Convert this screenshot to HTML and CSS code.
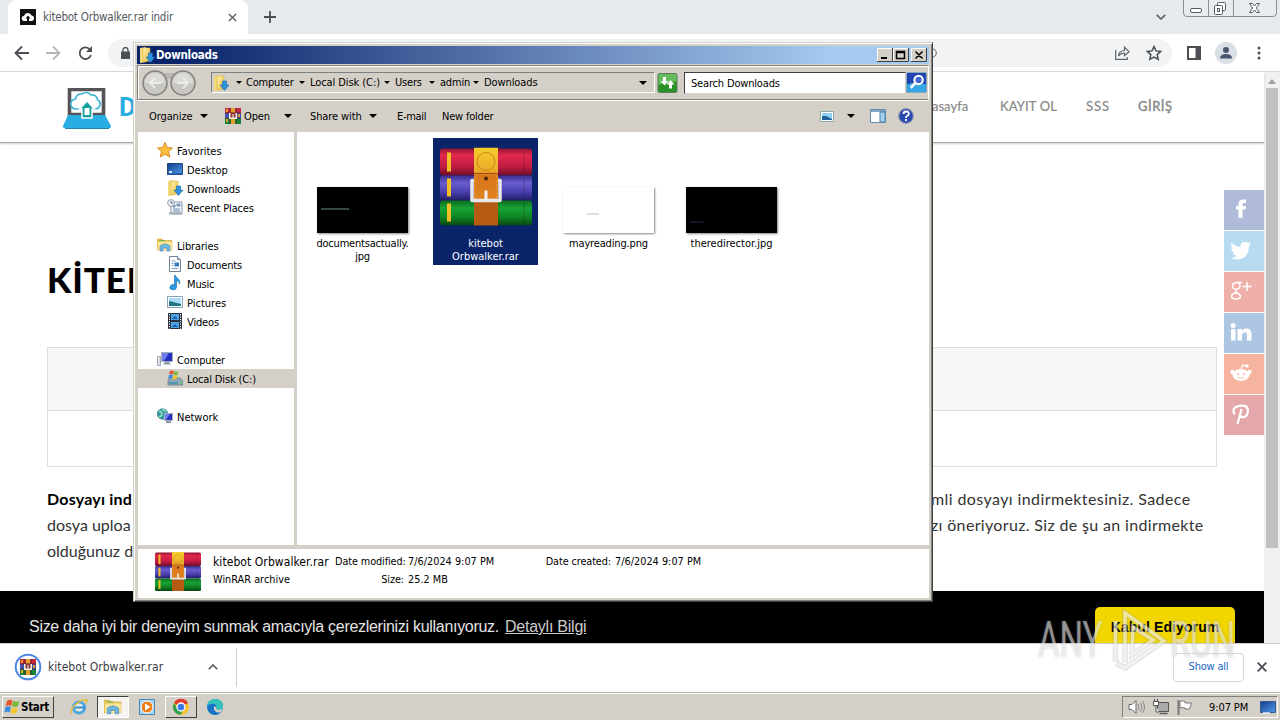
FILE: index.html
```
<!DOCTYPE html>
<html lang="tr">
<head>
<meta charset="utf-8">
<title>Desktop</title>
<link rel="stylesheet" href="styles.css">
</head>
<body>
<svg class="defs" aria-hidden="true">
<defs>
<linearGradient id="gr" x2="0" y2="1"><stop offset="0" stop-color="#8e1730"/><stop offset=".25" stop-color="#e2284c"/><stop offset=".65" stop-color="#c41d42"/><stop offset="1" stop-color="#6f0d28"/></linearGradient>
<linearGradient id="gb" x2="0" y2="1"><stop offset="0" stop-color="#36308c"/><stop offset=".3" stop-color="#6a5ccf"/><stop offset=".65" stop-color="#4a41ae"/><stop offset="1" stop-color="#211c66"/></linearGradient>
<linearGradient id="gg" x2="0" y2="1"><stop offset="0" stop-color="#0c6a1e"/><stop offset=".3" stop-color="#17a334"/><stop offset=".65" stop-color="#0f8526"/><stop offset="1" stop-color="#07450f"/></linearGradient>
<linearGradient id="gs" x2="0" y2="1"><stop offset="0" stop-color="#f4cf2c"/><stop offset=".3" stop-color="#eda92a"/><stop offset=".36" stop-color="#d9761b"/><stop offset=".7" stop-color="#e08420"/><stop offset="1" stop-color="#a4500f"/></linearGradient>
<linearGradient id="gf" x2="1" y2="1"><stop offset="0" stop-color="#fff3b0"/><stop offset="1" stop-color="#e8b93c"/></linearGradient>
<linearGradient id="gscr" x2="1" y2="1"><stop offset="0" stop-color="#123c8c"/><stop offset="1" stop-color="#4f9be8"/></linearGradient>
<symbol id="rar" viewBox="0 0 92 78" preserveAspectRatio="none">
<rect x="0" y="1" width="92" height="27" rx="3" fill="url(#gr)"/><rect y="28" x="0" width="92" height="25" rx="3" fill="url(#gb)"/><rect y="53" x="0" width="92" height="25" rx="3" fill="url(#gg)"/>
<path d="M7 5h4v19H7zM7 31h4v18H7zM7 56h4v18H7z" fill="#f2bf27"/>
<path d="M84 4v21M84 30v20M84 55v20" stroke="#000" stroke-opacity=".2"/>
<path d="M34 0h24v78H34z" fill="url(#gs)"/><path d="M35 1v76M57 1v76" stroke="#f7c052" stroke-dasharray="2 2" stroke-opacity=".7"/>
<path d="M34 54h24v24H34z" fill="#b65b14"/><circle cx="46" cy="14" r="9" fill="none" stroke="#c98916"/><path d="M34 26h24" stroke="#9a5210"/><circle cx="46" cy="31" r="2" fill="#4b2608"/>
<path d="M34 33h-2v20h28V33h-2" fill="none" stroke="#e8e8ec" stroke-width="3.500" stroke-linejoin="round"/><path d="M46 43v9" stroke="#f3f3f3" stroke-width="3"/>
</symbol>
<symbol id="rar16" viewBox="0 0 16 16"><path fill="#c8283e" d="M0 0h16v5H0z"/><path fill="#3d55b8" d="M0 5h16v5H0z"/><path fill="#17823a" d="M0 10h16v6H0z"/><path fill="#e3a02a" d="M1 1h2v3H1zM6 0h4v5H6zM1 11h2v3H1zM6 11h4v5H6zM13 6h2v3h-2z"/><path fill="#5c2233" d="M0 4.600h16v.8H0zM0 9.800h16v.8H0zM4.500 0h.8v16h-.8zM10.800 0h.8v16h-.8z"/><path fill="#f4f0e8" d="M4 5h8v6H4z"/><path fill="#8a3330" d="M5.500 5h5v4.500h-5z"/><path fill="#fff" d="M7.500 6h1v4h-1z"/></symbol>
<symbol id="dl" viewBox="0 0 16 16"><path d="M1 1l6-1v15l-6 1z" fill="#f4d978"/><path d="M4 1h7v13l-7 1z" fill="url(#gf)" stroke="#d2a83b" stroke-width=".5"/><path d="M9.500 6h4v4H16l-4.500 5.500L7 10h2.500z" fill="#2e92de" stroke="#1467b0" stroke-width=".6"/></symbol>
<symbol id="star" viewBox="0 0 16 16"><path d="M8 .5l2.200 5 5.300.5-4 3.600 1.300 5.400L8 12.200 3.200 15l1.300-5.400L.5 6l5.300-.5z" fill="#fbbe3c" stroke="#d87f17" stroke-width=".9"/></symbol>
<symbol id="desk" viewBox="0 0 16 16"><path d="M.5 2.500h15v11H.5z" fill="url(#gscr)" stroke="#24447c"/><path d="M1 12h14v1.500H1z" fill="#2a65b5"/><path d="M2 10h3v2H2z" fill="#cfe6ff"/></symbol>
<symbol id="recent" viewBox="0 0 16 16"><path d="M4 3h11v12H4z" fill="#f4f7fa" stroke="#8b9aa8"/><path d="M6 6h2v2H6zM10 5h3v2h-3zM6 10h7M6 12h7" stroke="#6a8cae" fill="#a5bfd8"/><circle cx="4" cy="4" r="3.400" fill="#eef3f7" stroke="#94a3b0"/><path d="M4 2v2h2" fill="none" stroke="#55636f"/><path d="M2 13h12v2.500H2z" fill="#a9b5bf"/></symbol>
<symbol id="lib" viewBox="0 0 16 16"><path d="M0 2h5l1 1.500h9V13H0z" fill="#f0cc59" stroke="#c9a13a" stroke-width=".6"/><path d="M1 5h14v8H1z" fill="#fbe79a"/><path d="M3 9q5-4 10 0v5h-3v-3H6v3H3z" fill="#6fb7e4" stroke="#3c87ba" stroke-width=".6"/><path d="M2 3.500h6" stroke="#6cb35b"/></symbol>
<symbol id="doc" viewBox="0 0 16 16"><path d="M2.500.5h8l3 3v12h-11z" fill="#fff" stroke="#6f8296"/><path d="M10.500.5v3h3" fill="#dbe5ee" stroke="#6f8296"/><path d="M4.500 5h4M4.500 7.500h2M4.500 9.500h2M4.500 12.500h7" stroke="#7d9fc6"/><path d="M7.500 6.500h4.500v4H7.500z" fill="#3b78c0"/></symbol>
<symbol id="music" viewBox="0 0 16 16"><path d="M8 0c1 3 6 4 4.500 9-.3-2-1.500-3-3-3.400V12.500a3.300 2.600 0 1 1-2-2.700V0z" fill="#2d9be2" stroke="#1467ad" stroke-width=".6"/></symbol>
<symbol id="pic" viewBox="0 0 16 16"><path d="M.5 2.500h15v11H.5z" fill="#fff" stroke="#8aa0b4"/><path d="M2 4h12v8H2z" fill="#a6dcf5"/><path d="M2 7l4 1 8 2v2H2z" fill="#1e7583"/></symbol>
<symbol id="video" viewBox="0 0 16 16"><path d="M1 0h14v16H1z" fill="#263240"/><path d="M4 1h8v6H4zM4 9h8v6H4z" fill="#4fa3e0"/><path d="M2.500 1v15M13.500 1v15" stroke="#fff" stroke-dasharray="1.200 1.200"/><path d="M5 6l3-3 3 3zM5 14l3-3 3 3z" fill="#1d5ea8"/></symbol>
<symbol id="pc" viewBox="0 0 16 16"><path d="M4.500 1.500h11v9h-11z" fill="#2430c0" stroke="#a7afbd"/><path d="M5 2h7l-5 8H5z" fill="#6d7df0"/><path d="M8 11h4l2 2.500H6z" fill="#8d97a5"/><path d="M.5 5.500h3v9h-3z" fill="#dbe0e6" stroke="#8f99a5" stroke-width=".8"/></symbol>
<symbol id="disk" viewBox="0 0 16 16"><path d="M1 10l2-2h10l3 3v4H1z" fill="#93a9b8" stroke="#56707f" stroke-width=".7"/><path d="M2 12h9v2H2z" fill="#4b9ab2"/><path d="M13 12h2v1.500h-2z" fill="#52df66"/><path d="M3 1q2-1 4 0L6 4.500q-2-1-4 0z" fill="#e8562d"/><path d="M7.500 1.200q2 1 4 0l-1 3.500q-2 1-4 0z" fill="#79b93b"/><path d="M2 5q2-1 4 0L5 8.500q-2-1-4 0z" fill="#3e8de0"/><path d="M6.500 5.200q2 1 4 0l-1 3.500q-2 1-4 0z" fill="#f6c52c"/></symbol>
<symbol id="net" viewBox="0 0 16 16"><circle cx="5.500" cy="6" r="5.200" fill="#329a9f" stroke="#27737e" stroke-width=".7"/><path d="M2 3q3 1 3 3t-3 3M5 1l4 3" stroke="#9de3c4" fill="none" stroke-width="1.500"/><path d="M7.500 5.500h8v7h-8z" fill="#2430c0" stroke="#aab2be"/><path d="M8 6h5l-4 6H8z" fill="#6d7df0"/><path d="M9 14h5" stroke="#8d97a5" stroke-width="2"/></symbol>
<symbol id="flag" viewBox="0 0 16 16"><path d="M3 2q3-2 5.500-.5L7.300 7Q5 5.500 1.600 7z" fill="#e8562d"/><path d="M9.300 2q3 1.500 6 0L14 7.300q-3 1.500-6 0z" fill="#79b93b"/><path d="M1.400 8q3-1.500 5.600 0l-1.200 5.500q-2.500-1.500-5.500 0z" fill="#3e8de0"/><path d="M7.800 8.500q3 1.500 6 0L12.500 14q-3 1.500-6 0z" fill="#f6c52c"/></symbol>
</defs>
</svg>

<div class="desktop">
<div class="tabstrip">
 <div class="tab"><svg class="fav" viewBox="0 0 16 16"><path fill="#111" d="M0 0h16v16H0z"/><path fill="#fff" d="M4.500 12a2.500 2.500 0 0 1-.5-5 4 4 0 0 1 7.600-.5A2.800 2.800 0 0 1 12 12H9V9.500h1.500L8 6.500 5.500 9.500H7V12z"/></svg>
 <span class="tabtitle">kitebot Orbwalker.rar indir</span>
 <svg class="tabx" viewBox="0 0 10 10"><path d="M1 1l8 8M9 1L1 9" stroke="#5f6368" stroke-width="1.600"/></svg></div>
 <svg class="plus" viewBox="0 0 12 12"><path d="M6 0v12M0 6h12" stroke="#4a4d51" stroke-width="1.800"/></svg>
 <svg class="chev" viewBox="0 0 10 6"><path d="M.8.800L5 5 9.200.8" fill="none" stroke="#5f6368" stroke-width="1.700"/></svg>
 <svg class="winctl" viewBox="0 0 94 17"><path d="M.5 0v13q0 3.500 3.500 3.500h86q3.500 0 3.500-3.500V0M25.500 0v16M50.500 0v16" fill="#e9ecef" stroke="#8a8e94"/><rect x="7.500" y="8.500" width="11" height="4" rx="1.500" fill="#fff" stroke="#555b66"/><rect x="34.500" y="2.500" width="8" height="8" rx="1" fill="#fff" stroke="#555b66"/><rect x="31.500" y="5.500" width="8" height="9" rx="1" fill="#fff" stroke="#555b66"/><rect x="34.500" y="8.500" width="2" height="3" fill="none" stroke="#555b66"/><path d="M66.500 3.500h3l2 2.500 2-2.500h3l-3.200 4.500 3.200 4.500h-3l-2-2.500-2 2.500h-3l3.200-4.500z" fill="#fff" stroke="#555b66"/></svg>
</div>
<div class="toolbar">
 <svg class="navs" viewBox="0 0 82 16" fill="none" stroke-width="1.800"><path d="M15 8H2M8 1.500L1.500 8 8 14.500" stroke="#4c5055"/><path d="M32 8h13M39 1.500L45.500 8 39 14.500" stroke="#b5b8bb"/><path d="M76 4.500A5.800 5.800 0 1 0 77 10" stroke="#4c5055"/><path d="M78 1v6h-6z" fill="#4c5055"/></svg>
 <div class="omni"><svg class="lock" viewBox="0 0 9 12"><path d="M0 4.500h9V12H0z" fill="#4c5055"/><path d="M2 5V3a2.500 2.500 0 0 1 5 0v2" fill="none" stroke="#4c5055" stroke-width="1.300"/></svg>
 <svg class="omniend" viewBox="0 0 8 10"><path d="M0 .7h2a4.300 4.300 0 0 1 0 8.600H0" fill="none" stroke="#666"/></svg>
 <svg class="share" viewBox="0 0 15 14" fill="none" stroke="#5f6368" stroke-width="1.200"><path d="M.7 4v9.300h11.500V11M3.500 10q.5-5.500 6-5.500V1.200L14 5.700l-4.500 4V7Q5.500 7 3.500 10z"/></svg>
 <svg class="bstar" viewBox="0 0 16 16"><path d="M8 1.500l2 4.400 4.700.5-3.500 3.200 1 4.700L8 12l-4.200 2.300 1-4.700L1.300 6.400 6 5.900z" fill="none" stroke="#4c5055" stroke-width="1.500"/></svg></div>
 <svg class="side" viewBox="0 0 14 14"><path d="M1 1h12v12H1z" fill="none" stroke="#4c5055" stroke-width="2"/><path d="M8.500 0H14v14H8.500z" fill="#4c5055"/></svg>
 <svg class="avatar" viewBox="0 0 22 22"><circle cx="11" cy="11" r="11" fill="#dadfe6"/><circle cx="11" cy="8" r="3" fill="#4a5670"/><path d="M5 16.500q0-4.500 6-4.500t6 4.500z" fill="#4a5670"/></svg>
 <svg class="dots" viewBox="0 0 4 14"><g fill="#4c5055"><circle cx="2" cy="2" r="1.500"/><circle cx="2" cy="7" r="1.500"/><circle cx="2" cy="12" r="1.500"/></g></svg>
</div>

<div class="viewport">
 <div class="site">
  <header class="sitehead">
   <svg class="logo" viewBox="0 0 50 42"><path d="M7.500 1.500h34v25h-34z" fill="#fff" stroke="#565457" stroke-width="3.600"/><path d="M6 27h37l6 11q.5 2-2 2H3q-2.500 0-2-2z" fill="#29aee4"/><path d="M3 40.500h44" stroke="#2586aa"/><path d="M18 21h-4a5 5 0 0 1-.5-10q1-5.500 6.500-5 5-3.500 9 1 6-.5 6.500 5 3 1 2.500 5-1 4-5 4h-3" fill="#fff" stroke="#3ab2d4" stroke-width="1.600"/><path d="M25 13l7.500 8H30v9H20v-9h-2.500z" fill="#12a19c" stroke="#fff" stroke-width="1.400"/><path d="M22.500 20h5v7h-5z" fill="#fff"/></svg>
   <span class="brand">D</span>
   <nav class="menu"><span class="m1">Anasayfa</span><span class="m2">KAYIT OL</span><span class="m3">SSS</span><span class="m4">GİRİŞ</span></nav>
  </header>
  <main class="main">
   <h1>KİTEB</h1>
   <div class="panel"><div class="prow head"></div><div class="prow"></div></div>
   <div class="para">
    <span><b>Dosyayı ind</b></span><span class="p1">mli dosyayı indirmektesiniz. Sadece</span>
    <span>dosya uploa</span><span class="p2">zı öneriyoruz. Siz de şu an indirmekte</span>
    <span>olduğunuz d</span><span></span>
   </div>
  </main>
  <div class="cookie"><span class="ctext">Size daha iyi bir deneyim sunmak amacıyla çerezlerinizi kullanıyoruz.</span><a class="clink">Detaylı Bilgi</a><span class="cbtn">Kabul Ediyorum</span></div>
  <aside class="social">
   <div class="fb"><svg viewBox="0 0 22 22"><path d="M8.500 20v-8.500H6V8h2.500V6Q8.500 1.500 13 1.500h3V5h-2q-1.500 0-1.500 1.500V8H16l-.5 3.500h-3V20z"/></svg></div>
   <div class="tw"><svg viewBox="0 0 22 22"><path d="M21 4.500l-2.200.8L20.500 3l-2.600 1a4.500 4.500 0 0 0-7.500 4Q5 7.500 1.800 3.500 0 7.500 3 9.800L1.200 9.300q.3 3.500 3.500 4.500l-1.800.1q1 2.700 4 3Q4.500 19 .5 18.800q3 2 7.500 1.800Q19 19 19 7z"/></svg></div>
   <div class="gp"><svg viewBox="0 0 22 22" fill="none" stroke="#fff" stroke-width="1.500"><path d="M12 2.500H6.500Q2.500 3 2.500 6t3.500 3.200T10 6 6.500 2.500M7 9.500q-3 2-.5 3t4 3.500q0 3-4.500 3t-4.500-2.700Q1.500 13 7.500 12.800M17 2v9M12.500 6.500h9"/></svg></div>
   <div class="li"><svg viewBox="0 0 22 22"><path d="M1 8h4.500v11.500H1zM7.500 8H12v1.800Q13.500 7.500 16 7.600q5.500 0 5.500 5.400v6.500H17V13.500q0-2.300-2-2.300T12 13.500v6H7.500z"/><circle cx="3.200" cy="4.500" r="2.500"/></svg></div>
   <div class="rd"><svg viewBox="0 0 22 22"><ellipse cx="11" cy="13" rx="8.500" ry="6"/><circle cx="2.500" cy="10" r="2.200"/><circle cx="19.500" cy="10" r="2.200"/><path d="M11 8l1.500-5 4 1" fill="none" stroke="#fff" stroke-width="1.300"/><circle cx="17" cy="4" r="1.800"/><g fill="#f5b3a0"><circle cx="8" cy="12" r="1"/><circle cx="14" cy="12" r="1"/></g><path d="M7.500 15.500q3.500 1.500 7 0" fill="none" stroke="#f5b3a0" stroke-width=".8"/></svg></div>
   <div class="pt"><svg viewBox="0 0 22 22" fill="none" stroke="#fff" stroke-width="2.200"><path d="M4.500 11.500Q1.500 5.500 7 3.500 17 .5 18 7q0 6.500-4.500 7.200Q10 14.500 9.500 11.500M11.500 6L7.500 21"/></svg></div>
  </aside>
 </div>
 <div class="scroll"><svg viewBox="0 0 8 5"><path d="M4 0l4 5H0z" fill="#a0a0a0"/></svg><div class="thumb"></div></div>
</div>

<div class="dlbar">
 <svg class="dlicon" viewBox="0 0 28 28"><circle cx="14" cy="14" r="12.300" fill="#fff" stroke="#4f86e0" stroke-width="2"/><use href="#rar16" x="6" y="6" width="16" height="16"/></svg>
 <span class="dlname">kitebot Orbwalker.rar</span>
 <svg class="caret" viewBox="0 0 10 6"><path d="M.8 5.200L5 1l4.200 4.200" fill="none" stroke="#5f6368" stroke-width="1.700"/></svg>
 <span class="dlsep"></span><span class="showall">Show all</span>
 <svg class="dlx" viewBox="0 0 10 10"><path d="M.7.700l8.600 8.600M9.300.7L.7 9.300" stroke="#4c5055" stroke-width="1.900"/></svg>
</div>

<div class="taskbar">
 <div class="start"><svg viewBox="0 0 16 16"><use href="#flag"/></svg><span>Start</span></div>
 <div class="q"><svg viewBox="0 0 18 18"><circle cx="9" cy="9.500" r="5.600" fill="#fff" fill-opacity=".5" stroke="#4aa5e0" stroke-width="3"/><path d="M5 9.500h10" stroke="#3a92d2" stroke-width="2"/><path d="M1.500 15.500Q0 11 6 6T17 2q0 2-2 4" fill="none" stroke="#e8bd3c" stroke-width="1.500"/></svg></div>
 <div class="q pressed"><svg viewBox="0 0 16 16"><use href="#lib"/></svg></div>
 <div class="q"><svg class="wmp" viewBox="0 0 16 16"><path d="M.5.500h15v15H.5z" fill="#a9d4f1" stroke="#4588b9"/><circle cx="8" cy="8" r="6" fill="#f07e14" stroke="#fff"/><path d="M6 4.500L11.500 8 6 11.500z" fill="#fff"/></svg></div>
 <div class="q raised"><svg viewBox="0 0 18 18"><circle cx="9" cy="9" r="8" fill="#f4c22b"/><path d="M9 9L2 5A8 8 0 0 1 16 5z" fill="#de3c2f"/><path d="M2 5A8 8 0 0 0 8.500 17L12 10.500 6 11z" fill="#35a04c"/><circle cx="9" cy="9" r="4" fill="#3a78e7" stroke="#fff" stroke-width="1.300"/></svg></div>
 <div class="q"><svg viewBox="0 0 18 18"><circle cx="9" cy="9" r="8" fill="#1673c5"/><path d="M1 8Q2 1 9.500 1 17 1.500 17 8q0 4-4.500 4-2.500 0-2-2Q10.500 5 5 6 2 6.500 1 8z" fill="#35c2b8"/><path d="M10.500 10q-.5 2 2 2 3 0 4.300-2-.5 3-3.300 4.700Q7 14.500 8 8.500q2.500-.5 2.500 1.500z" fill="#d4d0c8"/></svg></div>
 <div class="tray">
  <svg class="t1" viewBox="0 0 18 16"><path d="M1 5.500h3l4-4v13l-4-4H1z" fill="#fff" stroke="#666"/><path d="M10 5q2 3 0 6M12.500 3.500q3 4.500 0 9M14.500 2q4 6 0 12" fill="none" stroke="#888"/></svg>
  <svg class="t2" viewBox="0 0 16 16"><path d="M4.500 3.500h11v9h-11z" fill="#aaa" stroke="#555"/><path d="M6.500 14.500h8" stroke="#555" stroke-width="1.500"/><path d="M.5 2.500h5v4h-5zM1.500 0v2M4.500 0v2M3 7v6h3" fill="#fff" stroke="#555"/></svg>
  <svg class="t3" viewBox="0 0 16 16"><path d="M1.500 1v15" stroke="#777" stroke-width="2"/><path d="M3 2.500q3-1.500 5 0v1.500h6.500l-2 6H8V9q-2-1-5 0z" fill="#fff" stroke="#777"/></svg>
  <span class="clock">9:07 PM</span>
  <svg class="t4" viewBox="0 0 16 13"><path d="M.5.500h15v11H.5z" fill="url(#gscr)" stroke="#35598f"/><path d="M3 12h7" stroke="#e5eef8" stroke-width="1.500"/></svg>
 </div>
</div>

<section class="explorer">
 <div class="title"><svg viewBox="0 0 16 16"><use href="#dl"/></svg><b>Downloads</b>
  <svg class="tbtns" viewBox="0 0 50 14"><g fill="#d4d0c8"><path d="M0 0h16v14H0zM16 0h16v14H16zM34 0h16v14H34z"/></g><path d="M.5 13V.5H15M16.500 13V.5H31M34.500 13V.5H49" fill="none" stroke="#fff"/><path d="M0 13.500h15.500V0M16 13.500h15.500V0M34 13.500h15.500V0" fill="none" stroke="#404040"/><path d="M4 10h6" stroke="#000" stroke-width="2"/><path d="M19.500 3.500h8v7h-8zM19.500 4.500h8M38.500 3.500l7 7M45.500 3.500l-7 7" fill="none" stroke="#000" stroke-width="1.500"/></svg></div>
 <div class="addr">
  <svg class="bf" viewBox="0 0 54 26"><path d="M13 3h28v6H13z" fill="#bbb8b2"/><circle cx="13" cy="13" r="12" fill="#c9c7c3" stroke="#83817d" stroke-width="1.500"/><circle cx="41" cy="13" r="12" fill="#c9c7c3" stroke="#83817d" stroke-width="1.500"/><path d="M3 13a10 10 0 0 1 20 0zM31 13a10 10 0 0 1 20 0z" fill="#dddbd7"/><path d="M19 13H8M13 8l-5 5 5 5M35 13h11M41 8l5 5-5 5" fill="none" stroke="#ecebe8" stroke-width="2"/></svg>
  <div class="crumbs"><svg class="cic" viewBox="0 0 16 16"><use href="#dl"/></svg><i class="tri s"></i><span class="c1">Computer</span><i class="tri s"></i><span class="c2">Local Disk (C:)</span><i class="tri s"></i><span class="c3">Users</span><i class="tri s"></i><span class="c4">admin</span><i class="tri s"></i><span class="c5">Downloads</span><i class="tri end"></i></div>
  <svg class="refresh" viewBox="0 0 20 20"><rect x=".5" y=".5" width="19" height="19" rx="1.500" fill="#299329" stroke="#5c7a5c"/><path d="M1 1h18v8Q10 8 1 12z" fill="#64bc5e"/><path d="M5.500 4h3v4H11l-4 4.500L3 8h2.500zM11.500 15.500v-4H9L13 7l4 4.500h-2.500v4z" fill="#fff"/></svg>
  <div class="search">Search Downloads</div>
  <svg class="sbtn" viewBox="0 0 20 20"><rect x=".5" y=".5" width="19" height="19" rx="1.500" fill="#2144b0" stroke="#8ab"/><path d="M1 12q9-4 18 0v7H1z" fill="#35a6e6"/><circle cx="12" cy="7.500" r="4" fill="#3f67cf" stroke="#fff" stroke-width="2"/><path d="M9 10.500L4.500 15" stroke="#fff" stroke-width="2.500"/></svg>
 </div>
 <div class="cmd"><span>Organize</span><i class="tri"></i><svg viewBox="0 0 16 16"><use href="#rar16"/></svg><span>Open</span><i class="tri"></i><span>Share with</span><i class="tri"></i><span class="em">E-mail</span><span class="nf">New folder</span>
  <svg class="v1" viewBox="0 0 14 11"><path d="M.5.500h13v10H.5z" fill="#fff" stroke="#8aa"/><path d="M2 2h10v7H2z" fill="#8fd0f0"/><path d="M2 5l4 0 6 3v1H2z" fill="#20609c"/></svg><i class="tri"></i>
  <svg viewBox="0 0 16 14"><path d="M.5.500h15v13H.5z" fill="#fff" stroke="#688aab"/><path d="M1 1h14v2H1z" fill="#7fa5c8"/><path d="M10 3h5v10h-5z" fill="#a5d3ef" stroke="#4d82ac"/></svg>
  <svg viewBox="0 0 16 16"><circle cx="8" cy="8" r="7.300" fill="#2c49ad" stroke="#8893b0" stroke-width="1.200"/><path d="M5.500 6q0-2.500 2.700-2.500T10.800 6Q10.800 7 9 8 8 8.500 8 10M8 11v2" fill="none" stroke="#fff" stroke-width="1.800"/></svg></div>
 <div class="body">
  <div class="tree">
   <div class="r"><svg><use href="#star"/></svg><span>Favorites</span></div>
   <div class="r k"><svg><use href="#desk"/></svg><span>Desktop</span></div>
   <div class="r k"><svg><use href="#dl"/></svg><span class="t">Downloads</span></div>
   <div class="r k"><svg><use href="#recent"/></svg><span class="t">Recent Places</span></div>
   <div class="r gap"><svg><use href="#lib"/></svg><span class="t">Libraries</span></div>
   <div class="r k"><svg><use href="#doc"/></svg><span class="t">Documents</span></div>
   <div class="r k"><svg><use href="#music"/></svg><span class="t">Music</span></div>
   <div class="r k"><svg><use href="#pic"/></svg><span>Pictures</span></div>
   <div class="r k"><svg><use href="#video"/></svg><span class="t">Videos</span></div>
   <div class="r gap"><svg><use href="#pc"/></svg><span class="t">Computer</span></div>
   <div class="r k sel"><svg><use href="#disk"/></svg><span class="t">Local Disk (C:)</span></div>
   <div class="r gap"><svg><use href="#net"/></svg><span>Network</span></div>
  </div>
  <div class="files">
   <div class="file"><div class="pic"><div class="th black"><em class="g"></em></div></div><span class="long">documentsactually.<br>jpg</span></div>
   <div class="file on"><div class="pic rarpic"><svg viewBox="0 0 92 78"><use href="#rar"/></svg></div><span>kitebot<br>Orbwalker.rar</span></div>
   <div class="file"><div class="pic"><div class="th white"><em class="w"></em></div></div><span class="mid">mayreading.png</span></div>
   <div class="file"><div class="pic"><div class="th black"><em class="b"></em></div></div><span>theredirector.jpg</span></div>
  </div>
 </div>
 <div class="details">
  <svg class="dr" viewBox="0 0 46 39" preserveAspectRatio="none"><use href="#rar" width="46" height="39"/></svg>
  <div class="dgrid"><span class="n">kitebot Orbwalker.rar</span><span class="l">Date modified:</span><span class="d">7/6/2024 9:07 PM</span><span class="l">Date created:</span><span class="d">7/6/2024 9:07 PM</span>
  <span class="d">WinRAR archive</span><span class="l">Size:</span><span class="d">25.2 MB</span></div>
 </div>
</section>

<div class="mark"><span>ANY</span><svg viewBox="0 0 58 64" fill="none"><g stroke="#999" stroke-opacity=".3" stroke-width="5.500"><path d="M4.500 14v41"/><path d="M14 56V6l39 28-39 27-9-5M22 20l20 13-21 15z"/></g><g stroke="#fff" stroke-opacity=".55" stroke-width="3.500"><path d="M4.500 14v41"/><path d="M14 56V6l39 28-39 27-9-5M22 20l20 13-21 15z"/></g></svg><span>RUN</span></div>
</div>
</body>
</html>
```
FILE: styles.css
```
* { box-sizing: border-box; }
body { margin: 0; font-family: "DejaVu Sans Condensed", "DejaVu Sans", sans-serif; font-stretch: condensed; font-size: 11px; color: #000; }
.defs { position: absolute; width: 0; height: 0; }
svg { display: block; flex: none; }
.desktop { position: relative; width: 1280px; height: 720px; overflow: hidden; display: flex; flex-direction: column; }

/* browser frame */
.tabstrip { height: 34px; background: #e7eaed; display: flex; align-items: center; padding-left: 8px; flex: none; }
.tab { width: 240px; height: 34px; background: #fff; border-radius: 8px 8px 0 0; display: flex; align-items: center; padding-left: 12px; }
.fav { width: 16px; height: 16px; }
.tabtitle { margin-left: 7px; width: 185px; font-size: 11.5px; letter-spacing: -.22px; color: #55595d; white-space: nowrap; }
.tabx { width: 9px; height: 9px; }
.plus { width: 12px; height: 12px; margin-left: 16px; }
.chev { width: 10px; height: 6px; margin-left: 880px; }
.winctl { width: 94px; height: 17px; margin-left: 17px; align-self: flex-start; }
.toolbar { height: 38px; background: #fff; border-bottom: 1px solid #d5d7d9; display: flex; align-items: center; flex: none; padding-left: 14px; }
.navs { width: 82px; height: 16px; }
.omni { margin-left: 12px; width: 1064px; height: 28px; border-radius: 14px; background: #f1f3f4; display: flex; align-items: center; padding-left: 13px; }
.lock { width: 9px; height: 12px; }
.omniend { width: 8px; height: 10px; margin-left: 800px; }
.share { width: 15px; height: 14px; margin-left: 177px; }
.bstar { width: 16px; height: 16px; margin-left: 16px; }
.side { width: 14px; height: 14px; margin-left: 15px; }
.avatar { width: 22px; height: 22px; margin-left: 14px; }
.dots { width: 4px; height: 14px; margin-left: 20px; }

/* web page */
.viewport { height: 571px; display: flex; flex: none; }
.site { position: relative; width: 1264px; background: #fff; display: flex; flex-direction: column; }
.sitehead { height: 71px; display: flex; align-items: center; padding-left: 62px; border-bottom: 1px solid #aaa; box-shadow: 0 1px 2px #ccc; flex: none; }
.logo { width: 50px; height: 42px; margin-top: 4px; }
.brand { margin-left: 7px; width: 20px; font: bold 26px "Roboto", sans-serif; color: #29aee4; }
.menu { margin-left: 777px; margin-top: -2px; display: grid; grid-template-columns: 84px 86px 52px 60px; font: 13px "Lato", sans-serif; color: #888; -webkit-text-stroke: .2px #888; }
.menu .m2 { letter-spacing: .15px; } .menu .m3 { letter-spacing: 1px; } .menu .m4 { letter-spacing: .5px; -webkit-text-stroke-width: .4px; }
.main { padding: 115px 47px 0; height: 448px; flex: none; }
h1 { margin: 0; font: 900 35px/42px "Lato", sans-serif; letter-spacing: .9px; }
.panel { margin-top: 47px; border: 1px solid #ddd; height: 120px; }
.prow { height: 55px; }
.prow.head { height: 63px; background: #f7f7f7; border-bottom: 1px solid #ddd; }
.para { margin-top: 19px; display: grid; grid-template-columns: 86px 300px; column-gap: 798px; grid-auto-rows: 26px; line-height: 26px; font-family: "Lato", sans-serif; font-size: 16px; color: #333; white-space: nowrap; }
.para b { color: #000; letter-spacing: .2px; }
.p1 { letter-spacing: .4px; } .p2 { letter-spacing: .34px; }
.cookie { height: 52px; background: #000; display: flex; align-items: flex-start; padding: 16px 29px 0; font: 16px "Liberation Sans", Arial, sans-serif; overflow: hidden; }
.ctext, .clink { line-height: 40px; color: #e4e4e4; white-space: nowrap; }
.ctext { width: 476px; letter-spacing: -.29px; }
.clink { width: 82px; text-decoration: underline; color: #ccc; letter-spacing: -.24px; }
.cbtn { margin-left: 508px; width: 140px; height: 50px; flex: none; background: #f1d600; border-radius: 5px 5px 0 0; text-align: center; font: bold 14px/40px "Liberation Sans", sans-serif; color: #000; letter-spacing: .1px; }
.social { position: absolute; right: 0; top: 118px; display: grid; gap: 1px; }
.social div { width: 40px; height: 40px; padding: 8px 0 0 6px; }
.social svg { width: 22px; height: 22px; fill: #fff; }
.social .gp svg, .social .pt svg { fill: none; }
.fb { background: #b0bbd9; } .tw { background: #b7dbf1; } .gp { background: #efb0aa; } .li { background: #adc6e3; } .rd { background: #f5b3a0; } .pt { background: #e5a8aa; }
.scroll { width: 16px; background: #f1f1f1; display: flex; flex-direction: column; align-items: center; }
.scroll svg { width: 8px; height: 5px; margin: 7px 0 4px; }
.thumb { width: 12px; height: 460px; background: #c1c1c1; }

/* download shelf */
.dlbar { height: 49px; flex: none; background: #fff; border-top: 1px solid #ccc; display: flex; align-items: center; padding: 0 0 2px 14px; }
.dlicon { width: 28px; height: 28px; }
.dlname { margin-left: 6px; width: 160px; font-size: 12px; color: #3c4043; letter-spacing: .05px; white-space: nowrap; }
.caret { width: 10px; height: 6px; }
.dlsep { width: 1px; height: 39px; margin-left: 18px; background: #ccc; }
.showall { margin-left: 936px; width: 71px; height: 29px; line-height: 26px; text-align: center; border: 1px solid #d5d8dc; border-radius: 4px; color: #1a66c8; letter-spacing: -.2px; }
.dlx { width: 10px; height: 10px; margin-left: 13px; }

/* taskbar */
.taskbar { height: 28px; flex: none; background: #d4d0c8; border-top: 1px solid #b5b5b5; box-shadow: inset 0 1px #fff; display: flex; align-items: center; padding: 1px 2px 0; }
.start { width: 52px; height: 22px; display: flex; align-items: center; padding-left: 1px; border: 1px solid; border-color: #fff #404040 #404040 #fff; font-weight: bold; font-size: 11.5px; letter-spacing: -.3px; }
.start svg { width: 16px; height: 16px; margin-right: 1px; }
.q { width: 32px; height: 22px; display: flex; align-items: center; justify-content: center; margin-left: 2px; }
.q svg { width: 18px; height: 18px; }
.q .wmp { width: 16px; height: 16px; }
.start + .q { margin-left: 9px; }
.pressed { background: #f5f4f1; border: 1px solid; border-color: #404040 #fff #fff #404040; }
.raised { border: 1px solid; border-color: #fff #404040 #404040 #fff; }
.tray { margin-left: auto; width: 156px; height: 22px; border: 1px solid; border-color: #808080 #fff #fff #808080; display: flex; align-items: center; padding-left: 5px; }
.t1 { width: 18px; height: 16px; } .t2 { width: 16px; height: 16px; margin-left: 7px; } .t3 { width: 16px; height: 16px; margin-left: 8px; }
.clock { margin-left: 16px; width: 51px; letter-spacing: -.1px; white-space: nowrap; } .t4 { width: 16px; height: 13px; }

/* file explorer window */
.explorer { position: absolute; left: 133px; top: 42px; width: 800px; height: 560px; background: #d4d0c8; border: 1px solid; border-color: #d4d0c8 #404040 #404040 #d4d0c8; box-shadow: inset 1px 1px #fff, inset -1px -1px #808080; padding: 3px; display: flex; flex-direction: column; }
.title { height: 18px; flex: none; background: linear-gradient(90deg, #0a246a 5%, #a6caf0 88%); color: #fff; display: flex; align-items: center; padding: 0 2px; font-size: 11.5px; }
.title > svg:first-child { width: 16px; height: 16px; margin-right: 1px; }
.title b { letter-spacing: -.25px; }
.title .tbtns { width: 50px; height: 14px; margin-left: auto; }
.addr { height: 35px; margin-top: 1px; flex: none; border: 1px solid; border-color: #808080 #fff #808080 #808080; box-shadow: inset 1px 1px #fff, 0 1px #fff; display: flex; align-items: center; padding-left: 4px; }
.bf { width: 54px; height: 26px; }
.crumbs { margin-left: 15px; width: 444px; height: 21px; border: 1px solid; border-color: #808080 #fff #fff #808080; display: flex; align-items: center; white-space: nowrap; }
.cic { width: 16px; height: 16px; margin-left: 1px; }
.tri { width: 0; height: 0; border: 4px solid transparent; border-top-color: #000; border-bottom: 0; flex: none; }
.tri.s { border-width: 3px 3px 0; margin: 0 5px 0 6px; }
.tri.s:nth-child(2) { margin: 0 4px 0 7px; }
.c1 { width: 47px; } .c2 { width: 68px; letter-spacing: -.08px; } .c3 { width: 28px; } .c4 { width: 27px; } .c1, .c3, .c4 { letter-spacing: -.2px; } .c5 { letter-spacing: -.1px; }
.crumbs .end { margin-left: auto; margin-right: 7px; }
.refresh { width: 21px; height: 20px; margin-left: 2px; }
.search { margin-left: 6px; width: 222px; height: 22px; line-height: 21px; padding-left: 6px; background: #fff; border: 1px solid; border-color: #404040 #d4d0c8 #d4d0c8 #404040; letter-spacing: -.17px; }
.sbtn { width: 21px; height: 21px; }
.cmd { height: 32px; flex: none; display: grid; grid-template-columns: 51px 25px 19px 40px 26px 59px 28px 45px 378px 27px 23px 28px 20px; align-items: center; padding-left: 12px; white-space: nowrap; }
.cmd span { letter-spacing: -.1px; } .cmd .em { letter-spacing: -.3px; } .cmd .nf { letter-spacing: -.2px; }
.cmd svg { width: 16px; height: 16px; } .cmd .v1 { width: 14px; height: 11px; }
.body { height: 413px; flex: none; display: grid; grid-template-columns: 156px 1fr; column-gap: 3px; padding-left: 1px; }
.tree { background: #fff; padding-top: 9px; }
.r { height: 19px; display: flex; align-items: center; padding-left: 19px; }
.r svg { width: 16px; height: 16px; margin: -1px 4px 0 0; }
.r span { padding-top: 2px; } .r .t { letter-spacing: -.15px; }
.r.k { padding-left: 29px; } .r.gap { margin-top: 19px; } .r.sel { background: #d4d0c8; }
.files { background: #fff; padding: 6px 0 0 13px; display: flex; align-items: flex-start; gap: 18px; }
.file { width: 105px; height: 127px; text-align: center; line-height: 13px; white-space: nowrap; }
.long { letter-spacing: -.2px; } .mid { letter-spacing: -.15px; }
.pic { height: 99px; padding-bottom: 4px; display: flex; align-items: flex-end; justify-content: center; }
.rarpic { padding-bottom: 11px; } .rarpic svg { width: 92px; height: 79px; }
.th { width: 91px; height: 46px; box-shadow: 1px 1px 2px #888; padding: 21px 4px; }
.black { background: #000; } .white { background: #fff; }
.th em { display: block; height: 2px; }
.g { width: 28px; background: #34483c; } .w { width: 12px; margin: 5px 0 0 20px; background: #ddd; } .b { width: 14px; margin-top: 13px; background: #11112c; }
.on { background: #0a246a; color: #fff; }
.details { margin-top: 4px; height: 49px; flex: none; background: #fff; display: flex; padding: 3px 0 0 17px; margin-left: 1px; }
.dr { width: 46px; height: 39px; }
.dgrid { margin-left: 12px; display: grid; grid-template-columns: 120px 71px 135px 68px 100px; grid-auto-rows: 18px; column-gap: 2px; line-height: 20px; white-space: nowrap; font-size: 10.8px; letter-spacing: -.1px; }
.dgrid .n { font-size: 12px; letter-spacing: .07px; }
.dgrid .d { letter-spacing: .02px; }
.l { text-align: right; padding-right: 2px; }

/* translucent overlay logo */
.mark { position: absolute; left: 1038px; top: 606px; width: 200px; height: 66px; display: flex; align-items: center; font: 400 50px/70px "Roboto", sans-serif; color: rgba(255,255,255,.5); text-shadow: 0 0 3px rgba(120,120,120,.4); }
.mark span { width: 65px; padding-top: 2px; transform: scaleX(.66); transform-origin: 0 50%; white-space: nowrap; }
.mark svg { width: 58px; height: 64px; margin: 0 1px 0 8px; }
```
